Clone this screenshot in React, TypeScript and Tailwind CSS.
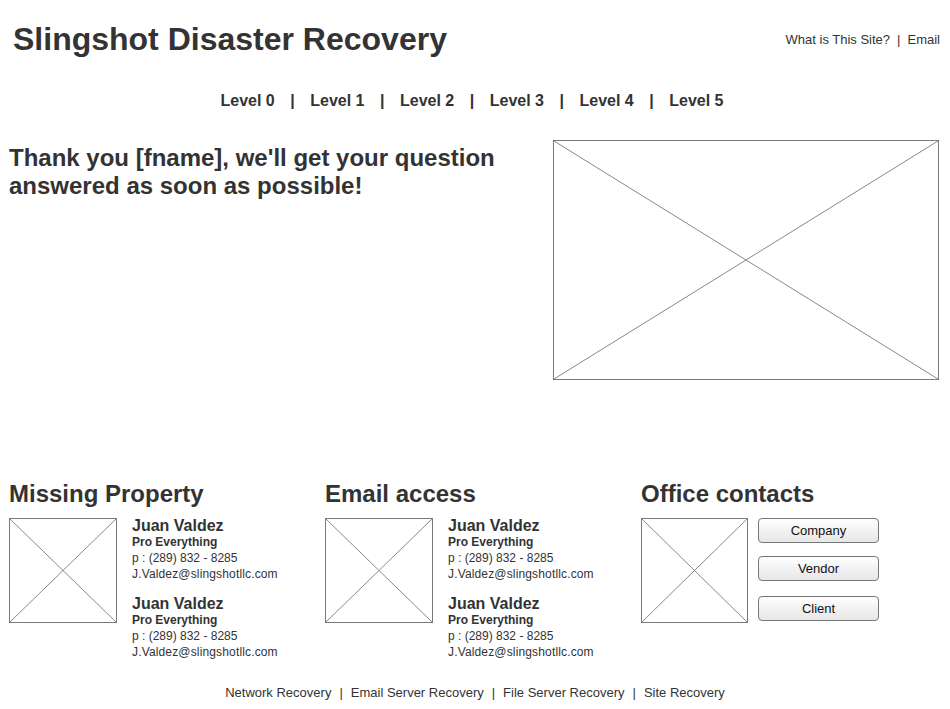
import React from 'react';

function Placeholder({ className }: { className: string }) {
  return (
    <div className={`relative border border-[#7a7a7a] bg-white ${className}`}>
      <svg className="absolute inset-0 h-full w-full" viewBox="0 0 100 100" preserveAspectRatio="none">
        <line x1="0" y1="0" x2="100" y2="100" stroke="#888" strokeWidth="1" vectorEffect="non-scaling-stroke" />
        <line x1="100" y1="0" x2="0" y2="100" stroke="#888" strokeWidth="1" vectorEffect="non-scaling-stroke" />
      </svg>
    </div>
  );
}

function Contact({ first }: { first?: boolean }) {
  return (
    <div className={first ? '' : 'mt-[14px]'}>
      <div className="text-[16px] font-bold leading-4">Juan Valdez</div>
      <div className="text-[12px] font-bold leading-4">Pro Everything</div>
      <div className="text-[12px] leading-4">p : (289) 832 - 8285</div>
      <div className="text-[12px] leading-4 tracking-[0.15px]">J.Valdez@slingshotllc.com</div>
    </div>
  );
}

function OfficeButton({ label, className }: { label: string; className?: string }) {
  return (
    <button className={`h-[25px] w-[121px] rounded-[4px] border border-[#777] bg-gradient-to-b from-white to-[#e6e6e6] text-[13px] leading-4 text-[#111] ${className ?? ''}`}>
      {label}
    </button>
  );
}

const levels = ['Level 0', 'Level 1', 'Level 2', 'Level 3', 'Level 4', 'Level 5'];
const footerLinks = ['Network Recovery', 'Email Server Recovery', 'File Server Recovery', 'Site Recovery'];

export default function App() {
  return (
    <div className="min-h-screen w-[950px] bg-white text-[#333] font-['Liberation_Sans',Arial,sans-serif]">
      {/* header */}
      <header className="flex items-start justify-between pt-[21px] pl-[13px] pr-[10px]">
        <h1 className="text-[32px] font-bold leading-9">Slingshot Disaster Recovery</h1>
        <div className="mt-[11px] flex gap-[7px] text-[13px] leading-4">
          <span>What is This Site?</span>
          <span>|</span>
          <span>Email</span>
        </div>
      </header>

      {/* levels */}
      <nav className="mt-[34px] flex justify-center gap-[15.5px] pr-[6px] text-[16px] font-bold leading-5">
        {levels.map((l, i) => (
          <React.Fragment key={l}>
            {i > 0 && <span>|</span>}
            <span>{l}</span>
          </React.Fragment>
        ))}
      </nav>

      {/* main */}
      <main className="mt-[29px] flex justify-between pl-[9px] pr-[11px]">
        <h2 className="mt-[4px] w-[500px] text-[24px] font-bold leading-7">
          Thank you [fname], we'll get your question answered as soon as possible!
        </h2>
        <Placeholder className="h-[240px] w-[386px]" />
      </main>

      {/* sections */}
      <section className="mt-[100px] grid grid-cols-[316px_316px_316px] pl-[9px]">
        <div>
          <h3 className="text-[24px] font-bold leading-7">Missing Property</h3>
          <div className="mt-[10px] flex items-start gap-[15px]">
            <Placeholder className="h-[105px] w-[108px] shrink-0" />
            <div>
              <Contact first />
              <Contact />
            </div>
          </div>
        </div>
        <div>
          <h3 className="text-[24px] font-bold leading-7">Email access</h3>
          <div className="mt-[10px] flex items-start gap-[15px]">
            <Placeholder className="h-[105px] w-[108px] shrink-0" />
            <div>
              <Contact first />
              <Contact />
            </div>
          </div>
        </div>
        <div>
          <h3 className="text-[24px] font-bold leading-7">Office contacts</h3>
          <div className="mt-[10px] flex items-start gap-[10px]">
            <Placeholder className="h-[105px] w-[107px] shrink-0" />
            <div className="flex flex-col">
              <OfficeButton label="Company" />
              <OfficeButton label="Vendor" className="mt-[13px]" />
              <OfficeButton label="Client" className="mt-[15px]" />
            </div>
          </div>
        </div>
      </section>

      {/* footer */}
      <footer className="mt-[25px] flex justify-center gap-[8px] text-[13px] leading-4">
        {footerLinks.map((f, i) => (
          <React.Fragment key={f}>
            {i > 0 && <span>|</span>}
            <span>{f}</span>
          </React.Fragment>
        ))}
      </footer>
    </div>
  );
}
